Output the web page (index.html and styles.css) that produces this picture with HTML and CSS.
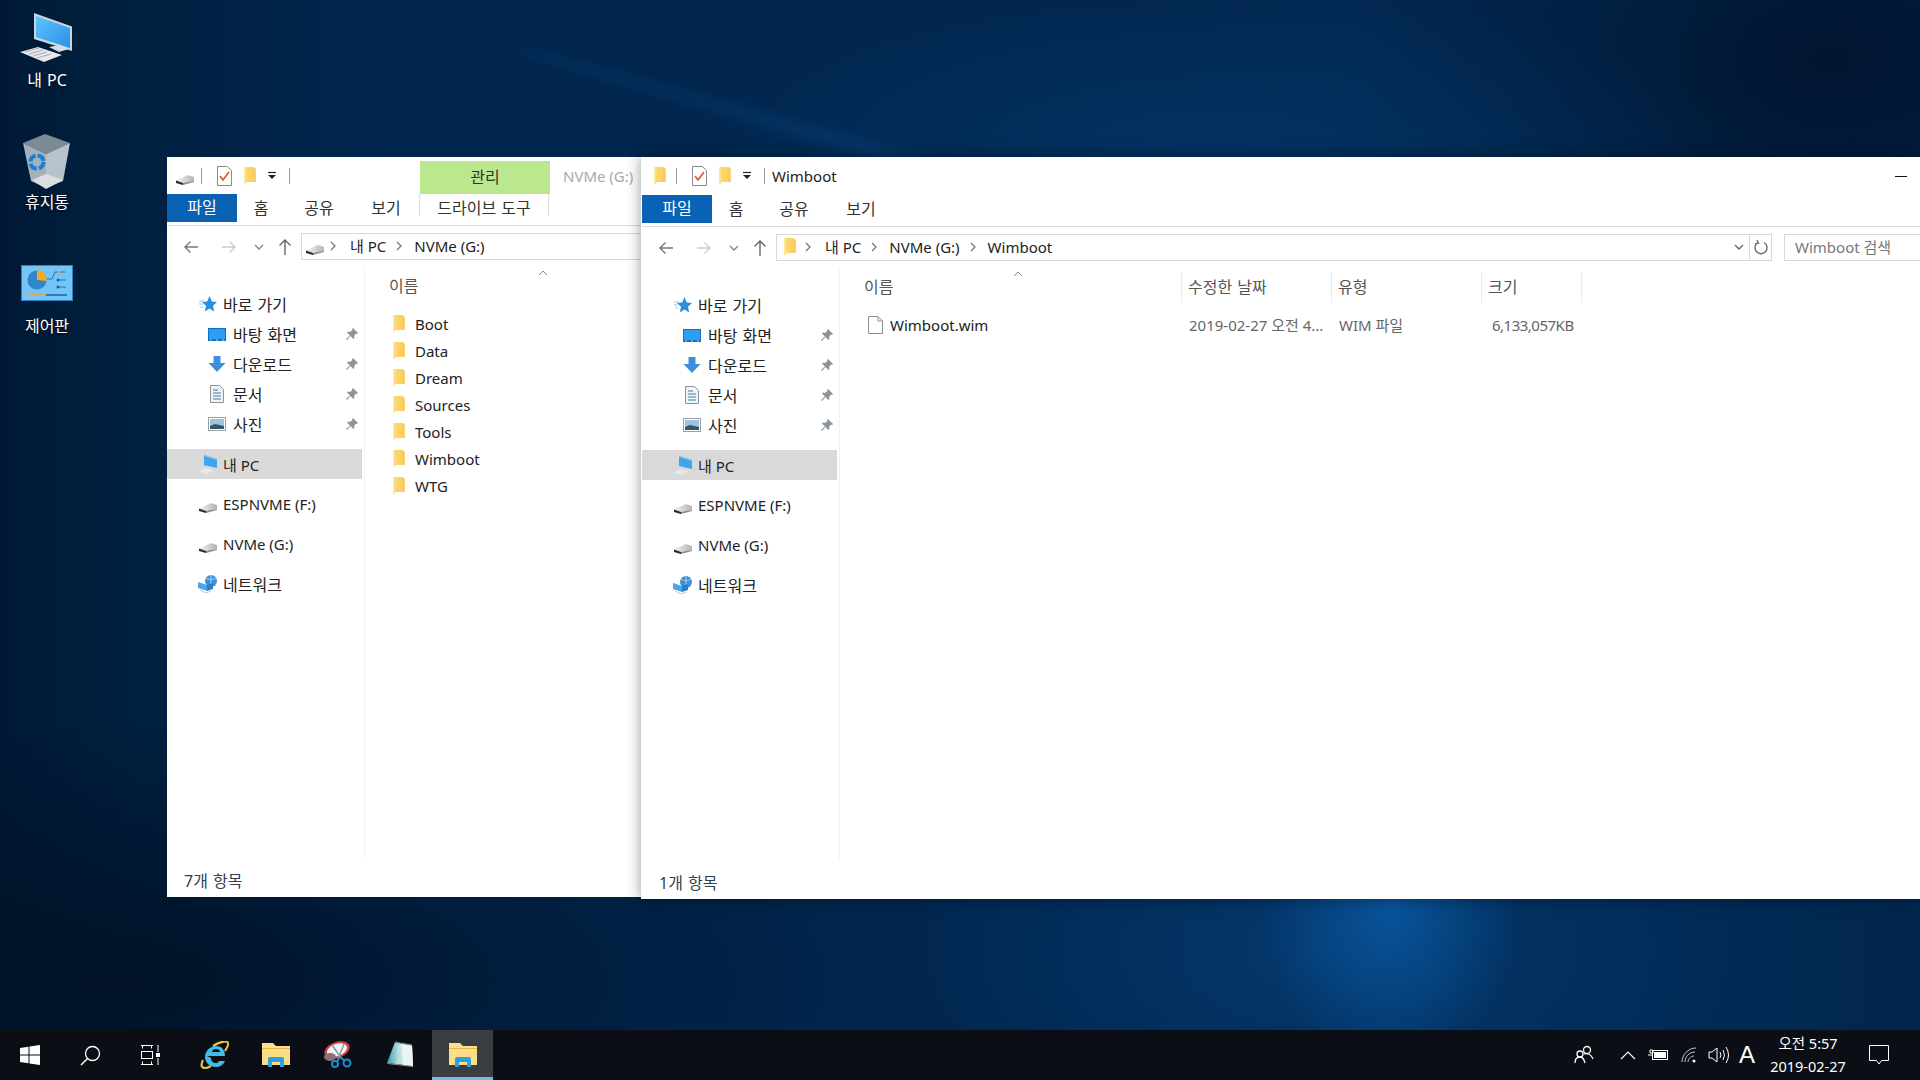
FILE: index.html
```html
<!DOCTYPE html>
<html lang="ko">
<head>
<meta charset="utf-8">
<title>Wimboot</title>
<link rel="stylesheet" href="styles.css">
</head>
<body>
<svg class="defs" width="0" height="0">
  <defs>
    <linearGradient id="gf" x1="0" x2="1" y1="0" y2="0"><stop offset="0" stop-color="#ffeeb0"/><stop offset=".22" stop-color="#fbd76f"/><stop offset=".75" stop-color="#fbd060"/><stop offset="1" stop-color="#ffe9ac"/></linearGradient>
    <linearGradient id="gd" x1="0" x2="1" y1="0" y2="0"><stop offset="0" stop-color="#f4f4f4"/><stop offset="1" stop-color="#b4b4b4"/></linearGradient>
    <linearGradient id="gs" x1="0" x2="1" y1="0" y2="1"><stop offset="0" stop-color="#5cc4ff"/><stop offset="1" stop-color="#2b8fe6"/></linearGradient>
    <linearGradient id="gn" x1="0" x2="1" y1="0" y2="0"><stop offset="0" stop-color="#3d9aa8"/><stop offset=".45" stop-color="#b8e0e4"/><stop offset="1" stop-color="#f0f4f4"/></linearGradient>
    <symbol id="folder" viewBox="0 0 14 18"><path d="M1 0h10l2 2v13H4l-3 3z" fill="url(#gf)"/><path d="M10 1l3 1v13h-3z" fill="#f6c04c" opacity=".55"/></symbol>
    <symbol id="drive" viewBox="0 0 18 10"><path d="M0 5.500L12 0l6 2v4L6 10 0 8z" fill="url(#gd)"/><path d="M0 5.500l7 2.500v2L0 8z" fill="#2c2c2c"/><path d="M7 8l11-2v1L7 10z" fill="#8c8c8c"/></symbol>
    <symbol id="check" viewBox="0 0 15 20"><path d="M.5.5h10l4 4v15H.5z" fill="#fff" stroke="#8a8a8a"/><path d="M3 10l3 4 6-8" fill="none" stroke="#d9532c" stroke-width="1.6"/></symbol>
    <symbol id="drop" viewBox="0 0 12 10"><path d="M2 1.500h8" stroke="#222" stroke-width="1.2"/><path d="M2 4h8l-4 4z" fill="#222"/></symbol>
    <symbol id="back" viewBox="0 0 16 16"><path d="M15 8H2M7.500 2.500L2 8l5.500 5.500" fill="none" stroke="currentColor" stroke-width="1.4"/></symbol>
    <symbol id="fwd" viewBox="0 0 16 16"><path d="M1 8h13M8.500 2.500L14 8l-5.500 5.500" fill="none" stroke="currentColor" stroke-width="1.400"/></symbol>
    <symbol id="up" viewBox="0 0 16 18"><path d="M8 17V2M2.500 7.500L8 2l5.500 5.500" fill="none" stroke="currentColor" stroke-width="1.400"/></symbol>
    <symbol id="chevd" viewBox="0 0 10 8"><path d="M1 2l4 4 4-4" fill="none" stroke="currentColor" stroke-width="1.400"/></symbol>
    <symbol id="chevr" viewBox="0 0 8 12"><path d="M2 2l4 4-4 4" fill="none" stroke="currentColor" stroke-width="1.300"/></symbol>
    <symbol id="star" viewBox="0 0 18 17"><path d="M10.500 0l2.300 5.500 5.200.5-4 3.700 1.200 5.800-4.700-3-4.700 3 1.200-5.800-4-3.700 5.200-.5z" fill="#2a8ee0"/><path d="M0 5h5M0 8h4M1 11h3" stroke="#8cc7f2" stroke-width="1"/></symbol>
    <symbol id="desk" viewBox="0 0 18 13"><rect width="18" height="13" fill="#0e6fc8"/><rect x="1" y="1" width="16" height="10" fill="#2e9df0"/><path d="M2 12h2M8 12h2M14 12h2" stroke="#a8d4f5"/></symbol>
    <symbol id="down" viewBox="0 0 17 16"><path d="M5 0h7v7h5l-8.500 9L0 7h5z" fill="#3d8fdc"/></symbol>
    <symbol id="doc" viewBox="0 0 14 18"><path d="M.5.5h9l4 4v13H.5z" fill="#eef4f7" stroke="#8c949a"/><path d="M3 5h5M3 8h8M3 11h8M3 14h8" stroke="#3f7f9f"/></symbol>
    <symbol id="pic" viewBox="0 0 18 14"><rect x=".5" y=".5" width="17" height="13" fill="#fff" stroke="#9aa0a6"/><rect x="2" y="2" width="14" height="10" fill="#9fc3dc"/><path d="M2 9l5-2 9 2v3H2z" fill="#34566a"/></symbol>
    <symbol id="pin" viewBox="0 0 12 12"><path d="M7 0l5 5-1 1-1-.5L8 8l.5 2-1 1-3-3L1 12 0 11l4-3.500-3-3 1-1 2 .5L6.500 2 6 1z" fill="#8a949c"/></symbol>
    <symbol id="pc" viewBox="0 0 20 20"><path d="M6 1l13 4v9L6 11z" fill="#3ea4ee"/><path d="M6 1l13 4v1L6 2z" fill="#8fc8ee"/><path d="M0 18l7-4 9 2-7 4z" fill="#e8e8e8"/></symbol>
    <symbol id="net" viewBox="0 0 20 18"><circle cx="13" cy="6" r="6" fill="#3e8fd6"/><path d="M8 3c3 2 7 2 10 0M13 0v12" stroke="#a6d2f2" fill="none"/><path d="M0 7l9 3v6l-9-3z" fill="#4da6ea"/><path d="M9 10l6-2v6l-6 2z" fill="#2a7fc9"/><path d="M2 15l6 3 5-2" stroke="#b8c6d0" fill="none"/></symbol>
    <symbol id="file" viewBox="0 0 15 18"><path d="M.5.5h9.500l4.500 4.500v12.500H.5z" fill="#fff" stroke="#8e8e8e"/><path d="M10 .5v4.500h4.500" fill="none" stroke="#8e8e8e"/></symbol>
    <symbol id="refresh" viewBox="0 0 14 18"><path d="M4 3.500a6 6 0 1 0 6 0M3 1l1.500 3-3.500 1" fill="none" stroke="#6a6a6a" stroke-width="1.400"/></symbol>
    <symbol id="explorer" viewBox="0 0 28 24"><path d="M0 0h11l3 3h14v19H0z" fill="#fbe08c"/><path d="M0 6h28v16H0z" fill="#fcde85"/><path d="M0 5h28v1H0z" fill="#e8b84e"/><path d="M6 24v-8a2 2 0 0 1 2-2h12a2 2 0 0 1 2 2v8h-4v-5h-8v5z" fill="#2ea0e0"/></symbol>
  </defs>
</svg>

<main class="desktop">
  <svg class="streak" width="1920" height="160" viewBox="0 0 1920 160"><path d="M530 50L940 160H880L510 50z" fill="#0d4f8c"/></svg>

  <a class="dicon d-pc">
    <svg class="dicon-img" width="56" height="52" viewBox="0 0 56 52">
      <path d="M15 1l38 13.500V39L15 27z" fill="#c9d4dc"/><path d="M17 4l34 12v20L17 25z" fill="url(#gs)"/>
      <path d="M30 35l11-2 9 4-10 3z" fill="#d9dcdf"/><path d="M1 40l18-5 24 8-18 7z" fill="#e6e8ea"/>
      <path d="M6 40l14-4M10 42l14-4M14 44l14-4M18 46l14-4" stroke="#a8aeb4"/>
    </svg>
    <span class="dicon-label">내 PC</span>
  </a>
  <a class="dicon d-bin">
    <svg class="dicon-img" width="50" height="56" viewBox="0 0 50 56">
      <path d="M1 10L23 1l25 9-24 11z" fill="#7c8a96"/><path d="M1 10l23 11v34L9 48z" fill="#a4b0ba"/><path d="M48 10L24 21v34l17-7z" fill="#b8c2ca"/>
      <path d="M10 47l14-6 17 6-17 9z" fill="#dcdfe2"/>
      <circle cx="15" cy="29" r="6.500" fill="none" stroke="#1b7fd2" stroke-width="4" stroke-dasharray="8 2.200"/>
    </svg>
    <span class="dicon-label">휴지통</span>
  </a>
  <a class="dicon d-cp">
    <svg class="dicon-img" width="52" height="36" viewBox="0 0 52 36">
      <rect width="52" height="36" fill="#2c82c4"/><rect x="1" y="1" width="50" height="34" fill="#74c5f6"/>
      <circle cx="16" cy="15" r="9.500" fill="#2f86c8"/><path d="M16 15V5a10 10 0 0 1 9.500 11z" fill="#f5a91e"/>
      <path d="M26 14h5l3-7h10M37 15h8M37 22h8" stroke="#1f78bb" fill="none"/><circle cx="38" cy="7" r="1.500" fill="#f5a91e"/><circle cx="37" cy="15" r="1.500" fill="#1565a8"/><circle cx="37" cy="22" r="1.500" fill="#1565a8"/>
      <path d="M6 30h18" stroke="#f5a91e" stroke-width="1.500"/><path d="M25 30h21" stroke="#1565a8" stroke-width="1.500"/>
    </svg>
    <span class="dicon-label">제어판</span>
  </a>

  <section class="win win-a">
    <div class="titlebar">
      <svg class="qi qi-first ic-drive" width="18" height="10"><use href="#drive"/></svg>
      <i class="tsep"></i>
      <svg class="qi qi-check" width="15" height="20"><use href="#check"/></svg>
      <svg class="qi qi-folder" width="14" height="18"><use href="#folder"/></svg>
      <svg class="qi qi-drop" width="12" height="10"><use href="#drop"/></svg>
      <i class="tsep tsep-b"></i>
      <div class="ctx-tab ko">관리</div>
      <span class="title-faint">NVMe (G:)</span>
    </div>
    <nav class="tabs">
      <span class="tab-file ko">파일</span>
      <span class="tab t-home ko">홈</span>
      <span class="tab t-share ko">공유</span>
      <span class="tab t-view ko">보기</span>
      <span class="tab t-ctx ko">드라이브 도구</span>
    </nav>
    <div class="addr-row">
      <svg class="nav nav-back" width="16" height="16"><use href="#back"/></svg>
      <svg class="nav nav-fwd" width="16" height="16"><use href="#fwd"/></svg>
      <svg class="nav nav-chev" width="10" height="8"><use href="#chevd"/></svg>
      <svg class="nav nav-up" width="16" height="18"><use href="#up"/></svg>
      <div class="addr">
        <span class="addr-icon"><svg class="ic-drive" width="18" height="10"><use href="#drive"/></svg></span>
        <svg class="crumb crumb-first" width="8" height="12"><use href="#chevr"/></svg><span>내 PC</span>
        <svg class="crumb" width="8" height="12"><use href="#chevr"/></svg><span>NVMe (G:)</span>
      </div>
    </div>
    <div class="body">
      <aside class="side">
        <div class="row r-top"><svg width="18" height="17"><use href="#star"/></svg><span class="ko">바로 가기</span></div>
        <div class="row r-sub"><svg width="18" height="13"><use href="#desk"/></svg><span class="ko">바탕 화면</span><svg class="pin" width="12" height="12"><use href="#pin"/></svg></div>
        <div class="row r-sub"><svg width="18" height="16"><use href="#down"/></svg><span class="ko">다운로드</span><svg class="pin" width="12" height="12"><use href="#pin"/></svg></div>
        <div class="row r-sub"><svg width="18" height="18"><use href="#doc"/></svg><span class="ko">문서</span><svg class="pin" width="12" height="12"><use href="#pin"/></svg></div>
        <div class="row r-sub"><svg width="18" height="14"><use href="#pic"/></svg><span class="ko">사진</span><svg class="pin" width="12" height="12"><use href="#pin"/></svg></div>
        <div class="row r-top r-sel r-gap"><svg width="20" height="20"><use href="#pc"/></svg><span>내 PC</span></div>
        <div class="row r-top r-gap"><svg class="ic-drive" width="18" height="10"><use href="#drive"/></svg><span>ESPNVME (F:)</span></div>
        <div class="row r-top r-gap"><svg class="ic-drive" width="18" height="10"><use href="#drive"/></svg><span>NVMe (G:)</span></div>
        <div class="row r-top r-gap"><svg width="20" height="18"><use href="#net"/></svg><span class="ko">네트워크</span></div>
      </aside>
      <div class="list">
        <div class="head"><div class="col col-name ko">이름<svg class="sort" width="10" height="6" viewBox="0 0 10 6"><path d="M1 5l4-4 4 4" fill="none" stroke="#888"/></svg></div></div>
        <div class="item"><svg width="14" height="18"><use href="#folder"/></svg><span>Boot</span></div>
        <div class="item"><svg width="14" height="18"><use href="#folder"/></svg><span>Data</span></div>
        <div class="item"><svg width="14" height="18"><use href="#folder"/></svg><span>Dream</span></div>
        <div class="item"><svg width="14" height="18"><use href="#folder"/></svg><span>Sources</span></div>
        <div class="item"><svg width="14" height="18"><use href="#folder"/></svg><span>Tools</span></div>
        <div class="item"><svg width="14" height="18"><use href="#folder"/></svg><span>Wimboot</span></div>
        <div class="item"><svg width="14" height="18"><use href="#folder"/></svg><span>WTG</span></div>
      </div>
    </div>
    <div class="status ko">7개 항목</div>
  </section>

  <section class="win win-b">
    <div class="titlebar">
      <svg class="qi qi-first" width="18" height="18" viewBox="-2 0 18 18"><use href="#folder" width="14" height="18"/></svg>
      <i class="tsep"></i>
      <svg class="qi qi-check" width="15" height="20"><use href="#check"/></svg>
      <svg class="qi qi-folder" width="14" height="18"><use href="#folder"/></svg>
      <svg class="qi qi-drop" width="12" height="10"><use href="#drop"/></svg>
      <i class="tsep tsep-b"></i>
      <span class="title-text">Wimboot</span>
      <i class="min-btn"></i>
    </div>
    <nav class="tabs">
      <span class="tab-file ko">파일</span>
      <span class="tab t-home ko">홈</span>
      <span class="tab t-share ko">공유</span>
      <span class="tab t-view ko">보기</span>
    </nav>
    <div class="addr-row">
      <svg class="nav nav-back" width="16" height="16"><use href="#back"/></svg>
      <svg class="nav nav-fwd" width="16" height="16"><use href="#fwd"/></svg>
      <svg class="nav nav-chev" width="10" height="8"><use href="#chevd"/></svg>
      <svg class="nav nav-up" width="16" height="18"><use href="#up"/></svg>
      <div class="addr">
        <span class="addr-icon"><svg width="14" height="18"><use href="#folder"/></svg></span>
        <svg class="crumb crumb-first" width="8" height="12"><use href="#chevr"/></svg><span>내 PC</span>
        <svg class="crumb" width="8" height="12"><use href="#chevr"/></svg><span>NVMe (G:)</span>
        <svg class="crumb" width="8" height="12"><use href="#chevr"/></svg><span>Wimboot</span>
        <svg class="addr-down" width="10" height="8"><use href="#chevd"/></svg>
        <span class="addr-refresh"><svg width="14" height="18"><use href="#refresh"/></svg></span>
      </div>
      <div class="search">Wimboot 검색</div>
    </div>
    <div class="body">
      <aside class="side">
        <div class="row r-top"><svg width="18" height="17"><use href="#star"/></svg><span class="ko">바로 가기</span></div>
        <div class="row r-sub"><svg width="18" height="13"><use href="#desk"/></svg><span class="ko">바탕 화면</span><svg class="pin" width="12" height="12"><use href="#pin"/></svg></div>
        <div class="row r-sub"><svg width="18" height="16"><use href="#down"/></svg><span class="ko">다운로드</span><svg class="pin" width="12" height="12"><use href="#pin"/></svg></div>
        <div class="row r-sub"><svg width="18" height="18"><use href="#doc"/></svg><span class="ko">문서</span><svg class="pin" width="12" height="12"><use href="#pin"/></svg></div>
        <div class="row r-sub"><svg width="18" height="14"><use href="#pic"/></svg><span class="ko">사진</span><svg class="pin" width="12" height="12"><use href="#pin"/></svg></div>
        <div class="row r-top r-sel r-gap"><svg width="20" height="20"><use href="#pc"/></svg><span>내 PC</span></div>
        <div class="row r-top r-gap"><svg class="ic-drive" width="18" height="10"><use href="#drive"/></svg><span>ESPNVME (F:)</span></div>
        <div class="row r-top r-gap"><svg class="ic-drive" width="18" height="10"><use href="#drive"/></svg><span>NVMe (G:)</span></div>
        <div class="row r-top r-gap"><svg width="20" height="18"><use href="#net"/></svg><span class="ko">네트워크</span></div>
      </aside>
      <div class="list">
        <div class="head">
          <div class="col col-name ko">이름<svg class="sort" width="10" height="6" viewBox="0 0 10 6"><path d="M1 5l4-4 4 4" fill="none" stroke="#888"/></svg></div>
          <div class="col col-date ko">수정한 날짜</div>
          <div class="col col-type ko">유형</div>
          <div class="col col-size ko">크기</div>
        </div>
        <div class="item item-detail">
          <div class="cell-name"><svg width="15" height="18"><use href="#file"/></svg><span>Wimboot.wim</span></div>
          <div class="cell cell-date">2019-02-27 오전 4...</div>
          <div class="cell cell-type">WIM 파일</div>
          <div class="cell cell-size">6,133,057KB</div>
        </div>
      </div>
    </div>
    <div class="status ko">1개 항목</div>
  </section>

  <footer class="taskbar">
    <div class="tb-sys">
      <svg width="20" height="20" viewBox="0 0 20 20"><path d="M0 3l8.500-1.200V9.500H0zM9.500 1.600L20 0v9.500H9.500zM0 10.500h8.500v7.700L0 17zM9.500 10.500H20V20L9.500 18.400z" fill="#fff"/></svg>
    </div>
    <div class="tb-sys">
      <svg width="21" height="21" viewBox="0 0 21 21"><circle cx="12.500" cy="8.500" r="7" fill="none" stroke="#fff" stroke-width="1.300"/><path d="M7.500 13.500L1 20" stroke="#fff" stroke-width="1.500"/></svg>
    </div>
    <div class="tb-sys">
      <svg width="20" height="20" viewBox="0 0 20 20"><path d="M1 .5h12M1 19.500h12M2.500 .5v3M11.500 .5v3M2.500 16.500v3M11.500 16.500v3" stroke="#fff" fill="none"/><rect x="1.500" y="6.500" width="11" height="7" fill="none" stroke="#fff"/><path d="M18 0v7M18 13v7" stroke="#fff"/><rect x="16" y="8" width="4" height="4" fill="#fff"/></svg>
    </div>
    <div class="tb-app">
      <svg width="30" height="28" viewBox="0 0 30 28"><path d="M4 19C0 27 5 29 12 25M14 5c6-4 14-6 15-3 1 2-1 5-3 8" fill="none" stroke="#e8c440" stroke-width="2.200"/><path d="M8 15h18c0-7-4-10-9-10-6 0-11 5-11 11s5 10 11 10c4 0 7-2 9-6h-6c-1 2-2 2-3 2-3 0-5-2-5-5zm5-4c0-2 2-3 4-3s4 1 4 3z" fill="#3dbde8" fill-rule="evenodd"/></svg>
    </div>
    <div class="tb-app"><svg width="28" height="24"><use href="#explorer"/></svg></div>
    <div class="tb-app">
      <svg width="28" height="28" viewBox="0 0 28 28"><ellipse cx="13" cy="9" rx="13" ry="8" transform="rotate(-20 13 9)" fill="#d8404a"/><ellipse cx="13" cy="9" rx="10.500" ry="6" transform="rotate(-20 13 9)" fill="#f0f2f4"/><ellipse cx="6" cy="16" rx="6" ry="4" fill="#8a7078"/><path d="M8 4l10 14M20 3L14 18" stroke="#8a98a4" stroke-width="1.500"/><circle cx="11" cy="23" r="3" fill="none" stroke="#1f8ad8" stroke-width="2"/><circle cx="23" cy="22" r="3.500" fill="none" stroke="#1f8ad8" stroke-width="2"/><path d="M15 17l-2 4M17 17l4 3" stroke="#1f8ad8" stroke-width="2"/></svg>
    </div>
    <div class="tb-app">
      <svg width="28" height="28" viewBox="0 0 28 28"><path d="M9 1l17 3 1 21-26-3z" fill="url(#gn)"/><path d="M15 2l11 2 1 21-10-1z" fill="#eef3f4"/><path d="M9 1l17 3" stroke="#5f6c72" stroke-width="1.500" stroke-dasharray="2 1"/><path d="M1 22l26 3v1L2 23z" fill="#8d9aa0"/></svg>
    </div>
    <div class="tb-app tb-active"><svg width="28" height="24"><use href="#explorer"/></svg></div>

    <div class="tray">
      <svg class="tr-people" width="20" height="20" viewBox="0 0 20 20"><circle cx="13" cy="5" r="3.500" fill="none" stroke="#fff" stroke-width="1.300"/><circle cx="6" cy="9" r="3" fill="none" stroke="#fff" stroke-width="1.300"/><path d="M1 18c0-4 2-6 5-6s4 2 5 6M10 9c3-1 7 0 9 5" fill="none" stroke="#fff" stroke-width="1.300"/></svg>
      <svg class="tr-chev" width="16" height="9" viewBox="0 0 16 9"><path d="M1 8l7-7 7 7" fill="none" stroke="#fff" stroke-width="1.100"/></svg>
      <svg class="tr-bat" width="20" height="12" viewBox="0 0 20 12"><rect x="4.500" y="1.500" width="15" height="9" fill="none" stroke="#fff"/><rect x="6" y="3" width="12" height="6" fill="#fff"/><path d="M0 6h4M2 1h3v3H2z" stroke="#fff" fill="none"/></svg>
      <svg class="tr-wifi" width="16" height="16" viewBox="0 0 16 16"><path d="M1 15C1 8 7 1 15 1M4 15c0-5 4-10 10-10M7 15c0-3 3-6 6-6" fill="none" stroke="#c4c8cc" stroke-width="1"/><circle cx="13" cy="14" r="1.500" fill="#fff"/></svg>
      <svg class="tr-vol" width="22" height="18" viewBox="0 0 22 18"><path d="M1 6h3l5-4v14l-5-4H1z" fill="none" stroke="#fff"/><path d="M12 6q2 3 0 6M15 4q3 5 0 10M18 1q5 8 0 16" fill="none" stroke="#fff"/></svg>
      <span class="tr-ime">A</span>
      <div class="clock"><span>오전 5:57</span><span>2019-02-27</span></div>
      <svg class="tr-action" width="20" height="20" viewBox="0 0 20 20"><path d="M.5.5h19v15H12.500L10 19l-2.500-3.500H.5z" fill="none" stroke="#fff"/></svg>
    </div>
  </footer>
</main>
</body>
</html>
```
FILE: styles.css
```css
* { box-sizing: border-box; }
html, body { margin: 0; height: 100%; overflow: hidden; }
body { font-family: "Noto Sans", "Noto Sans CJK KR", sans-serif; font-size: 15px; color: #1f1f1f; }
.defs { position: absolute; }
.ko { font-size: 16px; word-spacing: 1px; }

.desktop {
  position: relative;
  width: 1920px;
  height: 1080px;
  overflow: hidden;
  background:
    radial-gradient(ellipse 130px 170px at 1390px 905px, rgba(10,92,168,.8), rgba(10,92,168,0)),
    radial-gradient(ellipse 430px 230px at 1320px 950px, rgba(4,60,116,.8), rgba(4,60,116,0)),
    radial-gradient(ellipse 520px 170px at 1200px 150px, rgba(4,58,110,.6), rgba(4,58,110,0)),
    radial-gradient(ellipse 480px 320px at 1830px 60px, rgba(1,18,42,.85), rgba(1,18,42,0)),
    radial-gradient(ellipse 760px 260px at 130px 980px, rgba(0,14,34,.8), rgba(0,14,34,0)),
    linear-gradient(90deg, #001a36 0, #00203f 7%, #01264e 20%, #01264e 60%, #012a55 85%, #01274f 100%);
}
.streak { position: absolute; left: 0; top: 0; opacity: .3; filter: blur(6px); }

/* desktop icons */
.dicon { position: absolute; left: 0; width: 94px; display: flex; flex-direction: column; align-items: center; color: #fff; font-size: 16px; word-spacing: 1px; text-shadow: 0 1px 2px rgba(0,0,0,.8); }
.dicon-label { line-height: 20px; }
.d-pc { top: 12px; }
.d-pc .dicon-img { margin-bottom: 6px; }
.d-bin { top: 133px; }
.d-bin .dicon-img { margin-bottom: 3px; }
.d-cp { top: 265px; }
.d-cp .dicon-img { margin-bottom: 15px; }

/* explorer windows */
.win { position: absolute; top: 157px; background: #fff; display: flex; flex-direction: column; overflow: hidden; }
.win-a { left: 167px; width: 480px; height: 740px; }
.win-b { left: 641px; width: 1279px; height: 742px; padding-left: 1px; box-shadow: 0 0 14px rgba(0,0,0,.4); overflow: visible; }

.titlebar { height: 37px; display: flex; align-items: center; flex: none; }
.win-b .titlebar { height: 38px; }
.qi { flex: none; }
.qi-first { margin-left: 9px; }
.ic-drive { transform: translateY(4px); }
.tsep { width: 1px; height: 16px; background: #9a9a9a; margin-left: 7px; flex: none; }
.qi-check { margin-left: 15px; }
.qi-folder { margin-left: 11px; }
.qi-drop { margin-left: 9px; }
.tsep-b { margin-left: 11px; }
.ctx-tab { margin-left: 130px; align-self: flex-end; width: 130px; height: 33px; background: #bbe88f; text-align: center; line-height: 33px; color: #333; }
.title-faint { margin-left: 13px; color: #a9a9a9; white-space: nowrap; }
.title-text { margin-left: 7px; color: #222; }
.min-btn { width: 12px; height: 1px; background: #111; margin-left: auto; margin-right: 13px; }

.tabs { height: 32px; flex: none; display: flex; align-items: flex-start; border-bottom: 1px solid #dcdcdc; }
.tab-file { width: 70px; height: 28px; background: #0a62b5; color: #fff; text-align: center; line-height: 26px; }
.tab { text-align: center; line-height: 28px; color: #333; height: 22px; }
.t-home { width: 48px; }
.t-share { width: 68px; }
.t-view { width: 66px; }
.t-ctx { width: 130px; border-left: 1px solid #dcdcdc; border-right: 1px solid #dcdcdc; }

.addr-row { height: 42px; flex: none; display: flex; align-items: flex-start; padding-top: 7px; padding-left: 16px; }
.win-b .addr-row { height: 41px; }
.nav { flex: none; margin-top: 6px; color: #777; }
.nav-fwd { margin-left: 22px; color: #ccc; }
.nav-chev { margin-left: 17px; margin-top: 10px; color: #888; }
.nav-up { margin-left: 13px; margin-top: 5px; color: #666; }
.addr { margin-left: 8px; flex: 1; height: 27px; border: 1px solid #d9d9d9; display: flex; align-items: center; padding: 0 0 2px 3px; color: #222; white-space: nowrap; }
.addr-icon { width: 20px; display: flex; justify-content: center; }
.crumb { flex: none; margin: 0 11px 0 9px; color: #777; }
.crumb-first { margin: 0 13px 0 4px; }
.addr-down { margin-left: auto; color: #666; margin-right: 5px; }
.addr-refresh { width: 22px; align-self: stretch; margin-bottom: -2px; border-left: 1px solid #d9d9d9; display: flex; align-items: center; justify-content: center; }
.search { width: 136px; height: 27px; margin-left: 12px; border: 1px solid #d9d9d9; border-right: 0; padding-left: 10px; line-height: 25px; color: #777; flex: none; white-space: nowrap; }

.body { flex: 1; display: flex; min-height: 0; }
.side { width: 197px; flex: none; padding-top: 22px; }
.win-a .side { padding-top: 21px; }
.row { height: 30px; display: flex; align-items: center; width: 195px; white-space: nowrap; color: #222; position: relative; }
.r-top { padding-left: 31px; }
.r-top svg { width: 20px; flex: none; margin-right: 5px; }
.r-sub { padding-left: 41px; }
.r-sub > svg:first-child { flex: none; margin-right: 7px; }
.pin { position: absolute; left: 179px; top: 9px; }
.r-gap { margin-top: 10px; }
.r-sel { background: #d9d9d9; }

.list { flex: 1; border-left: 1px solid #f2f2f2; padding-left: 18px; min-width: 0; margin-bottom: 8px; }
.head { display: flex; height: 31px; margin-top: 4px; margin-bottom: 8px; color: #555; }
.win-a .head { margin-top: 3px; }
.col { padding-left: 6px; line-height: 30px; border-right: 1px solid #eaeaea; position: relative; flex: none; }
.col-name { width: 324px; }
.win-a .col-name { border-right: 0; }
.col-date, .col-type { width: 150px; }
.col-size { width: 100px; }
.sort { position: absolute; left: 155px; top: -1px; }
.item { height: 27px; display: flex; align-items: center; padding-left: 9px; color: #222; white-space: nowrap; }
.item > svg { flex: none; margin-right: 9px; }
.item-detail { padding-left: 0; }
.cell-name { width: 324px; padding-left: 10px; display: flex; align-items: center; flex: none; }
.cell-name svg { margin-right: 7px; flex: none; }
.cell { flex: none; color: #666; padding-left: 7px; overflow: hidden; }
.cell-date, .cell-type { width: 150px; }
.cell-size { width: 100px; padding-left: 10px; letter-spacing: -.5px; white-space: nowrap; }

.status { height: 31px; flex: none; padding-left: 17px; line-height: 30px; color: #2f3f52; }

/* taskbar */
.taskbar { position: absolute; left: 0; right: 0; bottom: 0; height: 50px; background: #0b0f15; display: flex; align-items: center; }
.tb-sys { width: 60px; height: 50px; display: flex; align-items: center; justify-content: center; flex: none; }
.tb-sys:nth-child(3) { margin-right: 3px; }
.tb-app { width: 62px; height: 50px; display: flex; align-items: center; justify-content: center; flex: none; }
.tb-active { background: #3a3d42; border-bottom: 3px solid #76b9ed; padding-top: 2px; width: 61px; margin-left: 1px; }
.tray { margin-left: auto; height: 50px; display: flex; align-items: center; color: #fff; flex: none; padding-right: 31px; }
.tr-chev { margin-left: 26px; }
.tr-bat { margin-left: 12px; }
.tr-wifi { margin-left: 13px; }
.tr-vol { margin-left: 11px; }
.tr-ime { margin-left: 9px; font-size: 24px; line-height: 1; font-family: "Liberation Sans", sans-serif; }
.clock { margin-left: 15px; width: 76px; display: flex; flex-direction: column; align-items: center; font-size: 14.5px; line-height: 23px; white-space: nowrap; }
.tr-action { margin-left: 23px; }
```
